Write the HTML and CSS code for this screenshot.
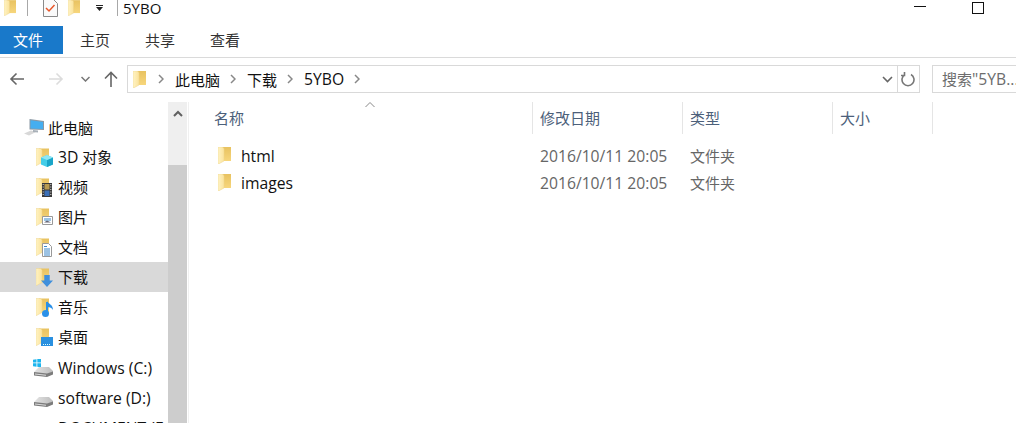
FILE: index.html
```html
<!DOCTYPE html>
<html lang="zh-CN">
<head>
    <meta charset="UTF-8">
    <title>5YBO</title>
    <link rel="stylesheet" href="styles.css">
</head>
<body>

<svg class="defs" width="0" height="0">
    <defs>
        <linearGradient id="folder-front" x1="0" y1="0" x2="1" y2="0">
            <stop offset="0" stop-color="#fff3c4"/>
            <stop offset="1" stop-color="#fbe39c"/>
        </linearGradient>
        <linearGradient id="folder-rear" x1="0" y1="0" x2="0" y2="1">
            <stop offset="0" stop-color="#e8c260"/>
            <stop offset="1" stop-color="#f7d67c"/>
        </linearGradient>
        <linearGradient id="drive-top" x1="0" y1="0" x2="1" y2="0">
            <stop offset="0" stop-color="#e4e4e4"/>
            <stop offset="1" stop-color="#bdbdbd"/>
        </linearGradient>
        <symbol id="folder" viewBox="0 0 13 17">
            <path d="M3 0h10v14H3z" fill="url(#folder-rear)"/>
            <path d="M0 0h4.500l1.500 1.500V14l-5.500 3H0z" fill="url(#folder-front)" stroke="#ecd48e" stroke-width=".5"/>
        </symbol>
        <symbol id="drive" viewBox="0 0 19 10">
            <path d="M0 5l5-5h10l4 4v1l-5 2H3z" fill="url(#drive-top)"/>
            <path d="M0 5l13 1.500L19 4.500v3L13 10 0 8.500z" fill="#7c7c7c"/>
            <path d="M1 6.500l11 1.200v1L1 7.500z" fill="#dcdcdc"/>
        </symbol>
    </defs>
</svg>

<div class="window">
    <div class="titlebar">
        <div class="qat">
            <svg class="qat-folder"><use href="#folder"/></svg>
            <span class="qat-sep"></span>
            <svg class="qat-check" viewBox="0 0 15 18">
                <path d="M.5.500h10l4 4v13H.5z" fill="#fafafa" stroke="#8a8a8a"/>
                <path d="M3 9l3 3 5.500-6" fill="none" stroke="#e8572a" stroke-width="1.500"/>
            </svg>
            <svg class="qat-folder qat-folder-2"><use href="#folder"/></svg>
            <svg class="qat-more" viewBox="0 0 7 6">
                <path d="M0 0h7v1H0zM0 2h7L3.500 6z" fill="#222"/>
            </svg>
            <span class="qat-sep qat-sep-2"></span>
        </div>
        <div class="title-text">5YBO</div>
        <div class="window-buttons">
            <span class="btn-min"></span>
            <span class="btn-max"></span>
        </div>
    </div>

    <div class="tabs">
        <div class="tab tab-file">文件</div>
        <div class="tab">主页</div>
        <div class="tab">共享</div>
        <div class="tab">查看</div>
    </div>

    <div class="addressbar">
        <div class="nav">
            <svg class="nav-arrow" viewBox="0 0 16 14">
                <path d="M15 7H2M7.500 1.500L2 7l5.500 5.500" fill="none" stroke="#666" stroke-width="1.600"/>
            </svg>
            <svg class="nav-arrow nav-forward" viewBox="0 0 16 14">
                <path d="M1 7h13M8.500 1.500L14 7l-5.500 5.500" fill="none" stroke="#dcdcdc" stroke-width="1.600"/>
            </svg>
            <svg class="nav-down" viewBox="0 0 9 6">
                <path d="M.5 1l4 4 4-4" fill="none" stroke="#777" stroke-width="1.500"/>
            </svg>
            <svg class="nav-up" viewBox="0 0 14 16">
                <path d="M7 16V2M1 7.500L7 1.500l6 6" fill="none" stroke="#666" stroke-width="1.600"/>
            </svg>
        </div>
        <div class="path">
            <svg class="path-folder"><use href="#folder"/></svg>
            <svg class="crumb-sep" viewBox="0 0 6 10"><path d="M1 1l4 4-4 4" fill="none" stroke="#888" stroke-width="1.500"/></svg>
            <span class="crumb">此电脑</span>
            <svg class="crumb-sep" viewBox="0 0 6 10"><path d="M1 1l4 4-4 4" fill="none" stroke="#888" stroke-width="1.500"/></svg>
            <span class="crumb">下载</span>
            <svg class="crumb-sep" viewBox="0 0 6 10"><path d="M1 1l4 4-4 4" fill="none" stroke="#888" stroke-width="1.500"/></svg>
            <span class="crumb latin">5YBO</span>
            <svg class="crumb-sep" viewBox="0 0 6 10"><path d="M1 1l4 4-4 4" fill="none" stroke="#888" stroke-width="1.500"/></svg>
            <span class="path-fill"></span>
            <svg class="path-down" viewBox="0 0 11 7"><path d="M1 1l4.500 4.500L10 1" fill="none" stroke="#666" stroke-width="1.600"/></svg>
            <span class="path-refresh">
                <svg viewBox="0 0 15 16" width="15" height="16"><path d="M4 3.500a6 6 0 1 0 6 0M3.500 1v3.500H0" fill="none" stroke="#777" stroke-width="1.600"/></svg>
            </span>
        </div>
        <div class="search">搜索<span class="latin">"5YB...</span></div>
    </div>

    <div class="content">
        <aside class="sidebar">
            <ul class="tree">
                <li class="tree-item tree-pc">
                    <svg class="tree-icon" viewBox="0 0 20 18">
                        <path d="M0 15.500l7-3 5 1.500-7 3.500z" fill="#d8d8d8"/>
                        <path d="M5.500 1L20 3v9L5.500 11.500z" fill="#8a98a4"/>
                        <path d="M6.500 2.200l12.500 1.700v7L6.500 10.500z" fill="#45aef0"/>
                        <path d="M9 12l5 .5v2l-5-.5z" fill="#a8b0b8"/>
                    </svg>
                    <span>此电脑</span>
                </li>
                <li class="tree-item tree-sub">
                    <span class="folder-icon"><svg class="folder-back"><use href="#folder"/></svg>
                    <svg class="folder-badge" viewBox="0 0 12 12"><path d="M6 0l6 2.500v7L6 12 0 9.500v-7z" fill="#43cde8"/><path d="M6 5l6-2.500v7L6 12z" fill="#1aa5c8"/><path d="M6 5L0 2.500 6 0l6 2.500z" fill="#8fe6f4"/></svg></span>
                    <span><span class="latin">3D</span> 对象</span>
                </li>
                <li class="tree-item tree-sub">
                    <span class="folder-icon"><svg class="folder-back"><use href="#folder"/></svg>
                    <svg class="folder-badge badge-film" viewBox="0 0 10 14"><path d="M0 0h10v14H0z" fill="#3a3a3a"/><path d="M2.500 1h5v5.500h-5z" fill="#b89a50"/><path d="M2.500 7.500h5V13h-5z" fill="#3c70b8"/><path d="M.7 1.500h1M.7 4h1M.7 6.500h1M.7 9h1M.7 11.500h1M8.300 1.500h1M8.300 4h1M8.300 6.500h1M8.300 9h1M8.300 11.500h1" stroke="#ddd"/></svg></span>
                    <span>视频</span>
                </li>
                <li class="tree-item tree-sub">
                    <span class="folder-icon"><svg class="folder-back"><use href="#folder"/></svg>
                    <svg class="folder-badge badge-photo" viewBox="0 0 11 9"><path d="M.5.500h10v8H.5z" fill="#fff" stroke="#999"/><path d="M2 2h7v3H2z" fill="#9cc4e4"/><path d="M2 6.500l3-2 4 2z" fill="#667"/></svg></span>
                    <span>图片</span>
                </li>
                <li class="tree-item tree-sub">
                    <span class="folder-icon"><svg class="folder-back"><use href="#folder"/></svg>
                    <svg class="folder-badge badge-doc" viewBox="0 0 10 14"><path d="M.5.500h6l3 3v10H.5z" fill="#fff" stroke="#999"/><path d="M2 3.500h3M2 6h6M2 8h6M2 10h6M2 12h6" stroke="#3a86c8"/></svg></span>
                    <span>文档</span>
                </li>
                <li class="tree-item tree-sub is-selected">
                    <span class="folder-icon"><svg class="folder-back"><use href="#folder"/></svg>
                    <svg class="folder-badge" viewBox="0 0 11 11"><path d="M3 0h5v5h3L5.500 11 0 5h3z" fill="#3f8fdc"/></svg></span>
                    <span>下载</span>
                </li>
                <li class="tree-item tree-sub">
                    <span class="folder-icon"><svg class="folder-back"><use href="#folder"/></svg>
                    <svg class="folder-badge badge-note" viewBox="0 0 11 16"><path d="M5 1v11" stroke="#2a90e8" stroke-width="2"/><circle cx="3.500" cy="12.500" r="3.500" fill="#2a90e8"/><path d="M5 0c1 3 6 3 6 9-1-2-3-3-6-3z" fill="#2a90e8"/></svg></span>
                    <span>音乐</span>
                </li>
                <li class="tree-item tree-sub">
                    <span class="folder-icon"><svg class="folder-back"><use href="#folder"/></svg>
                    <svg class="folder-badge badge-desk" viewBox="0 0 12 9"><path d="M0 0h12v9H0z" fill="#2a90e0"/><path d="M2 7.500h8" stroke="#dff" stroke-dasharray="1 1"/></svg></span>
                    <span>桌面</span>
                </li>
                <li class="tree-item tree-drive">
                    <span class="drive-icon">
                        <svg class="drive-logo" viewBox="0 0 8 8"><path d="M0 .8L3.500.2v3.300H0zM4.300 0L8-.4v3.900H4.300zM0 4.300h3.500v3.400L0 7.200zM4.300 4.300H8v4l-3.700-.5z" fill="#1cb5ee"/></svg>
                        <svg class="drive-body"><use href="#drive"/></svg>
                    </span>
                    <span class="latin">Windows (C:)</span>
                </li>
                <li class="tree-item tree-drive">
                    <span class="drive-icon">
                        <svg class="drive-body"><use href="#drive"/></svg>
                    </span>
                    <span class="latin">software (D:)</span>
                </li>
                <li class="tree-item tree-drive">
                    <span class="drive-icon"></span>
                    <span class="latin">DOCUMENT (E:)</span>
                </li>
            </ul>
            <div class="scrollbar">
                <div class="scroll-track">
                    <svg class="scroll-up" viewBox="0 0 10 7"><path d="M1 6l4-4 4 4" fill="none" stroke="#606060" stroke-width="2"/></svg>
                </div>
                <div class="scroll-thumb"></div>
            </div>
        </aside>

        <main class="list">
            <div class="list-head">
                <div class="col col-name">
                    名称
                    <svg class="sort-arrow" viewBox="0 0 10 5"><path d="M.5 5L5 .5 9.500 5" fill="none" stroke="#888"/></svg>
                </div>
                <div class="col col-date">修改日期</div>
                <div class="col col-type">类型</div>
                <div class="col col-size">大小</div>
            </div>
            <div class="list-row">
                <div class="cell col-name latin"><svg class="row-folder"><use href="#folder"/></svg>html</div>
                <div class="cell col-date latin">2016/10/11 20:05</div>
                <div class="cell col-type">文件夹</div>
            </div>
            <div class="list-row">
                <div class="cell col-name latin"><svg class="row-folder"><use href="#folder"/></svg>images</div>
                <div class="cell col-date latin">2016/10/11 20:05</div>
                <div class="cell col-type">文件夹</div>
            </div>
        </main>
    </div>
</div>

</body>
</html>
```

FILE: styles.css
```css
html, body {
    height: 100%;
    margin: 0;
    padding: 0;
    overflow: hidden;
}

body {
    background-color: #fff;
    color: #111;
    font-family: "Open Sans", "Noto Sans CJK SC", sans-serif;
    font-size: 15px;
}

.defs {
    display: block;
}

.latin {
    font-size: 15.7px;
}

.window {
    display: flex;
    flex-direction: column;
    height: 423px;
    overflow: hidden;
}

/* title bar */

.titlebar {
    display: flex;
    align-items: center;
    height: 16px;
    padding-bottom: 10px;
}

.qat {
    flex: none;
    display: flex;
    align-items: center;
    margin-left: 4px;
    width: 119px;
}

.qat-folder {
    width: 12px;
    height: 16px;
}

.qat-sep {
    width: 1px;
    height: 16px;
    margin-left: 11px;
    background-color: #a8a8a8;
}

.qat-check {
    width: 15px;
    height: 18px;
    margin-left: 15px;
}

.qat-folder-2 {
    margin-left: 10px;
}

.qat-more {
    width: 7px;
    height: 6px;
    margin-left: 16px;
}

.qat-sep-2 {
    margin-left: 14px;
}

.title-text {
    flex: 1;
}

.window-buttons {
    display: flex;
    align-items: center;
}

.btn-min {
    width: 12px;
    height: 1px;
    margin-bottom: 3px;
    background-color: #111;
}

.btn-max {
    width: 10px;
    height: 10px;
    margin-left: 46px;
    margin-right: 32px;
    border: 1px solid #111;
}

/* ribbon tabs */

.tabs {
    display: flex;
    height: 28px;
    border-bottom: 1px solid #dadada;
    padding-bottom: 3px;
}

.tab {
    box-sizing: border-box;
    width: 65px;
    padding-left: 17px;
    line-height: 28px;
    color: #333;
}

.tab-file {
    width: 63px;
    padding-left: 13px;
    background-color: #1979ca;
    color: #fff;
}

/* address bar */

.addressbar {
    display: flex;
    align-items: center;
    height: 28px;
    margin-top: 7px;
}

.nav {
    flex: none;
    display: flex;
    align-items: center;
    width: 127px;
}

.nav-arrow {
    width: 16px;
    height: 14px;
    margin-left: 9px;
}

.nav-forward {
    margin-left: 23px;
}

.nav-down {
    width: 9px;
    height: 6px;
    margin-left: 17px;
}

.nav-up {
    width: 14px;
    height: 16px;
    margin-left: 14px;
}

.path {
    flex: none;
    display: flex;
    align-items: center;
    box-sizing: border-box;
    width: 793px;
    height: 28px;
    border: 1px solid #d9d9d9;
}

.path-folder {
    width: 13px;
    height: 17px;
    margin-left: 5px;
    margin-right: 2px;
}

.crumb-sep {
    width: 6px;
    height: 10px;
    margin: 0 11px 0 10px;
}

.path-fill {
    flex: 1;
}

.path-down {
    width: 11px;
    height: 7px;
    margin-right: 4px;
}

.path-refresh {
    flex: none;
    display: flex;
    align-items: center;
    justify-content: center;
    width: 21px;
    height: 26px;
    border-left: 1px solid #d9d9d9;
}

.search {
    flex: none;
    box-sizing: border-box;
    width: 100px;
    height: 28px;
    margin-left: 12px;
    padding-left: 9px;
    border: 1px solid #d9d9d9;
    line-height: 26px;
    color: #6d6d6d;
    white-space: nowrap;
    overflow: hidden;
}

/* main area */

.content {
    flex: 1;
    display: flex;
    margin-top: 9px;
    min-height: 0;
}

.sidebar {
    flex: none;
    display: flex;
    box-sizing: border-box;
    width: 189px;
    padding-right: 1px;
    border-right: 1px solid #f0f0f0;
    overflow: hidden;
}

.tree {
    flex: none;
    width: 168px;
    margin: 0;
    padding: 10px 0 0;
    list-style: none;
}

.tree-item {
    display: flex;
    align-items: center;
    box-sizing: border-box;
    height: 30px;
    white-space: nowrap;
}

.tree-item.is-selected {
    background-color: #d9d9d9;
}

.tree-icon {
    flex: none;
    width: 20px;
    height: 18px;
    margin-right: 4px;
}

.tree-pc {
    padding-left: 24px;
}

.tree-sub {
    padding-left: 36px;
    padding-bottom: 1px;
}

.tree-drive {
    padding-left: 33px;
    padding-top: 2px;
}

.folder-icon {
    position: relative;
    flex: none;
    width: 16px;
    height: 18px;
    margin-right: 6px;
}

.folder-back {
    width: 13px;
    height: 18px;
}

.folder-badge {
    position: absolute;
    right: -1px;
    bottom: -1px;
    width: 12px;
    height: 12px;
}

.badge-film {
    width: 10px;
    height: 14px;
    right: 0;
}

.badge-photo {
    width: 11px;
    height: 9px;
    bottom: 1px;
}

.badge-doc {
    width: 10px;
    height: 14px;
    right: 0;
}

.badge-note {
    width: 11px;
    height: 16px;
}

.badge-desk {
    width: 12px;
    height: 9px;
    bottom: 0;
}

.drive-icon {
    position: relative;
    flex: none;
    width: 20px;
    height: 18px;
    margin-right: 5px;
}

.drive-logo {
    position: absolute;
    left: 0;
    top: 0;
    width: 8px;
    height: 8px;
}

.drive-body {
    position: absolute;
    left: 1px;
    bottom: 0;
    width: 19px;
    height: 10px;
}

.scrollbar {
    flex: 1;
    display: flex;
    flex-direction: column;
}

.scroll-track {
    display: flex;
    justify-content: center;
    height: 63px;
    background-color: #efefef;
}

.scroll-up {
    width: 10px;
    height: 7px;
    margin-top: 8px;
}

.scroll-thumb {
    flex: 1;
    background-color: #cdcdcd;
}

/* file list */

.list {
    flex: 1;
}

.list-head {
    display: flex;
    height: 32px;
    color: #4c607a;
}

.col {
    position: relative;
    display: flex;
    align-items: center;
    box-sizing: border-box;
    padding-bottom: 2px;
    border-right: 1px solid #e5e5e5;
}

.col-name {
    width: 344px;
    padding-left: 25px;
}

.col-date {
    width: 150px;
    padding-left: 7px;
}

.col-type {
    width: 150px;
    padding-left: 7px;
}

.col-size {
    width: 100px;
    padding-left: 7px;
}

.sort-arrow {
    position: absolute;
    left: 176px;
    top: 0;
    width: 10px;
    height: 5px;
}

.list-row {
    display: flex;
    align-items: center;
    height: 27px;
    color: #666;
}

.list-head + .list-row {
    margin-top: 8px;
}

.cell {
    display: flex;
    align-items: center;
    box-sizing: border-box;
}

.cell.col-name {
    color: #111;
    padding-left: 29px;
}

.row-folder {
    width: 13px;
    height: 17px;
    margin-right: 10px;
}
```
